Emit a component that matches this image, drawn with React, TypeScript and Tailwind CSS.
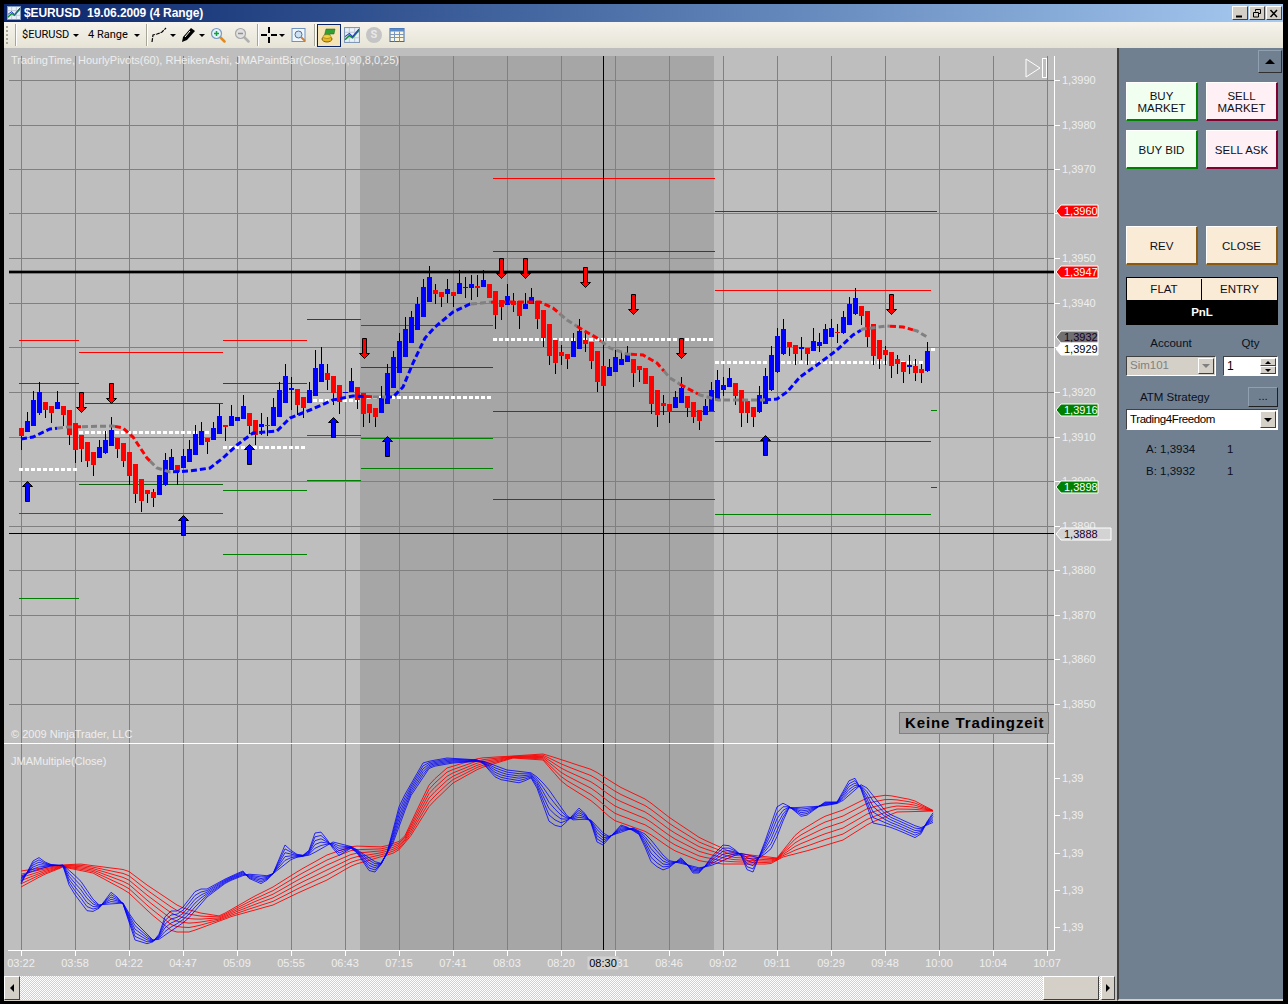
import type { ReactNode } from "react";

const BLUE = "#0000ff";
const RED = "#ff0000";

// [blue?, high, bodyTop, bodyBottom, low], in 3x crop units, one row per chart section
type Bar = [number, number, number, number, number];
const barsA: Bar[] = [
  [0,205,205,228,270],[1,155,183,216,216],[1,94,120,198,198],[1,67,96,160,165],[0,126,126,150,174],
  [0,138,138,160,189],[1,94,126,148,148],[0,138,138,165,198],[0,150,150,225,255],[0,190,190,270,310],
  [0,225,225,267,305],[0,246,246,303,320],[0,276,276,315,348],[1,240,261,294,294],[1,213,240,279,282],
  [1,171,210,258,258],[0,234,234,267,294],[0,249,249,303,320],[0,276,276,348,375],[0,312,312,402,430],
  [0,357,357,423,456],[0,390,390,402,430],[0,387,396,414,440],[1,345,345,405,405],[1,280,300,375,378],
  [1,267,291,330,330],[0,315,315,336,375],[1,267,288,324,324],[1,240,267,306,306],[1,195,222,285,285],
  [1,186,213,255,255],[0,234,234,246,282],[1,186,204,240,240],[1,132,168,222,222],[0,195,195,201,243],
  [1,135,168,198,198],[1,171,171,183,183],[1,105,138,177,177],[0,159,159,198,222],[0,180,180,225,255],
  [1,159,192,201,225],[0,171,195,198,228],[1,114,141,198,198],[1,66,90,171,171],[1,12,48,129,129],
  [1,51,84,90,150],[0,87,87,135,165],[0,111,111,144,174],[1,66,90,129,129],[1,-30,24,108,108],
  [1,-39,12,66,66],[0,12,39,60,90],[0,48,48,99,135],[0,75,75,126,162],[1,96,96,99,99],
  [1,24,63,96,96],[0,81,81,120,147],
];
const barsB: Bar[] = [
  [0,430,430,492,530],[0,462,462,490,520],[0,474,474,500,530],[1,408,444,489,489],[1,342,370,462,462],
  [1,303,322,414,414],[1,250,274,370,370],[1,200,238,322,322],[1,183,202,280,280],[1,141,163,241,241],
  [1,86,112,202,202],[1,48,82,157,157],[0,102,120,132,162],[0,126,126,141,171],[1,87,117,132,160],
  [0,126,126,138,171],[1,60,99,132,132],[1,80,111,114,145],[1,75,102,114,150],[0,75,108,114,140],
  [1,60,90,111,111],[0,102,102,144,144],[0,123,123,195,237],[0,150,150,171,210],[1,102,138,165,165],
  [0,130,153,165,185],[0,153,153,198,237],[1,130,162,177,177],[1,114,141,162,162],[0,153,153,207,237],
  [0,180,180,264,291],[0,222,222,318,345],[0,270,270,339,372],[0,285,306,318,345],[0,312,312,327,357],
  [1,250,273,321,321],[1,207,243,297,297],[0,250,270,282,306],[0,276,276,333,357],[0,303,303,396,426],
  [0,348,348,408,408],[1,327,351,378,378],[1,300,321,366,366],[1,306,327,345,345],[1,288,315,336,336],
  [0,327,327,369,411],[0,348,348,360,396],[0,354,354,402,402],[0,378,378,462,492],[0,420,420,495,530],
  [0,435,459,468,495],[0,462,462,486,520],[1,423,441,474,474],[1,381,414,459,459],[0,438,438,474,500],
  [0,456,456,501,520],[0,480,480,513,540],[1,447,468,495,495],[1,396,420,483,483],[1,360,390,450,450],
];
const barsC: Bar[] = [
  [1,321,345,360,378],[1,294,324,351,351],[0,339,339,378,405],[0,360,360,429,471],[0,393,393,429,459],
  [0,411,411,441,471],[1,348,375,426,429],[1,294,318,402,402],[1,228,255,360,363],[1,174,198,306,309],
  [1,147,177,252,255],[0,216,216,231,258],[0,225,225,252,285],[1,201,231,237,270],[0,234,234,252,285],
  [1,174,213,243,243],[1,189,216,228,246],[1,162,177,222,222],[1,147,174,201,201],[0,162,186,189,219],
  [1,123,141,189,192],[1,81,102,165,165],[1,54,84,132,135],[0,108,108,138,165],[0,123,123,201,231],
  [0,162,162,258,285],[0,210,210,267,297],[0,228,240,255,285],[0,246,246,288,324],[0,255,267,282,312],
  [0,276,276,306,339],[1,255,285,291,312],[0,267,288,309,333],[0,282,297,309,339],[1,216,243,303,306],
];
const bars = [
  ...barsA.map((b) => ({ b, off: 360 })),
  ...barsB.map((b) => ({ b, off: 250 })),
  ...barsC.map((b) => ({ b, off: 270 })),
].map(({ b, off }, i) => ({
  x: 21 + 6 * i,
  blue: b[0] === 1,
  hi: Math.round(b[1] / 3) + off,
  top: Math.round(b[2] / 3) + off,
  bot: Math.round(b[3] / 3) + off,
  lo: Math.round(b[4] / 3) + off,
}));

type Pt = [number, number];
const ma: Pt[] = [
  [21,439],[33,437],[50,429],[67,427],[113,426],[123,428],[133,437],[147,458],[157,468],[170,472],[190,471],[210,468],
  [223,458],[237,445],[253,433],[277,431],[290,418],[310,410],[333,400],[353,396],[375,397],[393,397],[403,387],
  [413,363],[425,338],[435,327],[453,312],[470,304],[493,302],[540,302],[553,308],[567,320],[583,330],[597,338],
  [610,348],[627,354],[643,355],[657,363],[670,378],[683,386],[700,395],[718,400],[763,400],[777,399],[787,392],
  [800,377],[817,365],[837,350],[853,335],[863,329],[887,326],[903,327],[917,331],[927,337],
];
const maColors: [number, number, string][] = [
  [21,57,BLUE],[57,75,"#808080"],[75,82,RED],[82,115,"#808080"],[115,150,RED],[150,173,"#808080"],[173,366,BLUE],
  [366,373,RED],[373,386,"#808080"],[386,471,BLUE],[471,491,"#808080"],[491,560,RED],[560,577,"#808080"],
  [577,601,RED],[601,631,"#808080"],[631,664,RED],[664,680,"#808080"],[680,698,RED],[698,765,"#808080"],
  [765,861,BLUE],[861,890,"#808080"],[890,913,RED],[913,927,"#808080"],
];

function yAt(pts: Pt[], x: number) {
  if (x <= pts[0][0]) return pts[0][1];
  for (let i = 1; i < pts.length; i++) {
    if (x <= pts[i][0]) {
      const [x0, y0] = pts[i - 1];
      const [x1, y1] = pts[i];
      return y0 + ((y1 - y0) * (x - x0)) / (x1 - x0);
    }
  }
  return pts[pts.length - 1][1];
}

function maPoints(x0: number, x1: number) {
  const inner = ma.filter(([x]) => x > x0 && x < x1);
  return [[x0, yAt(ma, x0)], ...inner, [x1, yAt(ma, x1)]].map((p) => p.join(",")).join(" ");
}

const R2 = "#ff0000";
const R1 = "#c80000";
const S2 = "#008000";
const S1 = "#106010";
// pivot sections: colour, y, x from, x to
const levels: [string, number, number, number][] = [
  [R2,340,19,79],[R1,383,19,79],[S2,513,19,223],[S2,598,19,79],
  [R2,352,79,223],[R1,403,85,223],[S1,484,79,223],
  [R2,340,223,307],[R1,383,223,307],[S2,490,223,307],[S2,554,223,307],
  [R1,319,307,361],[S2,435,307,361],[S2,480,307,361],
  [R2,325,361,493],[R1,367,361,493],[S2,438,361,493],[S2,468,361,493],
  [R2,178,493,715],[R1,251,493,715],[S1,411,493,715],[S1,499,493,715],
  [R1,211,715,937],[R2,290,715,931],[S1,441,715,931],[S2,514,715,931],
  [S2,410,931,937],[S1,487,931,937],
];
const pivots: [number, number, number][] = [
  [469,19,78],[432,79,222],[447,223,306],[400,313,360],[397,361,492],[339,493,714],[362,715,925],[349,931,936],
];
const downArrows: [number, number][] = [
  [81,392],[111,383],[364,338],[501,258],[525,258],[585,267],[633,294],[681,338],[891,294],
];
const upArrows: [number, number][] = [[27,481],[183,515],[249,444],[333,417],[387,436],[765,435]];

const priceLabels: [string, number][] = [
  ["1,3990",80],["1,3980",125],["1,3970",169],["1,3960",213],["1,3950",258],["1,3940",303],["1,3930",347],
  ["1,3920",392],["1,3910",437],["1,3900",481],["1,3890",526],["1,3880",570],["1,3870",615],["1,3860",659],["1,3850",704],
];
const flags: { label: string; y: number; fill: string; text: string; w?: number }[] = [
  { label: "1,3960", y: 211, fill: "#ff0000", text: "#ffffff" },
  { label: "1,3947", y: 272, fill: "#ff0000", text: "#ffffff" },
  { label: "1,3932", y: 337, fill: "#707070", text: "#180028" },
  { label: "1,3929", y: 349, fill: "#ffffff", text: "#000000" },
  { label: "1,3916", y: 410, fill: "#008000", text: "#ffffff" },
  { label: "1,3898", y: 487, fill: "#008000", text: "#ffffff" },
  { label: "1,3888", y: 534, fill: "#d3d3d3", text: "#180028", w: 1111 },
];
const times = [
  "03:22","03:58","04:22","04:47","05:09","05:55","06:43","07:15","07:41","08:03",
  "08:20","08:31","08:46","09:02","09:11","09:29","09:48","10:00","10:04","10:07",
];

// oscillator fans: the two outer lines of each, the lines between are interpolated
const blueFast: Pt[] = [
  [21,884],[33,861],[40,857],[47,864],[63,866],[70,888],[88,912],[97,911],[112,891],[123,904],[135,940],[148,944],
  [157,940],[167,911],[180,911],[197,889],[207,889],[227,878],[243,871],[248,878],[262,884],[272,876],[285,845],
  [295,854],[307,856],[315,833],[322,832],[338,856],[353,847],[370,872],[377,872],[387,853],[400,803],[423,763],
  [430,761],[447,758],[480,760],[497,779],[520,783],[533,777],[550,824],[562,827],[580,807],[590,820],[598,845],
  [603,845],[622,824],[640,835],[652,864],[665,871],[682,857],[693,873],[700,873],[713,855],[725,843],[740,853],
  [748,872],[753,872],[763,847],[778,804],[785,803],[803,818],[825,802],[837,802],[850,779],[857,778],[873,823],
  [887,826],[900,831],[916,838],[922,833],[930,815],[934,812],
];
const blueSlow: Pt[] = [
  [21,876],[33,871],[50,866],[63,865],[80,880],[97,905],[123,903],[133,920],[155,942],[187,920],[207,897],[227,882],
  [247,874],[270,876],[293,858],[310,855],[333,842],[353,847],[380,865],[393,843],[410,797],[430,767],[453,763],
  [483,761],[507,770],[533,773],[547,787],[570,820],[590,819],[607,837],[633,828],[647,835],[667,860],[700,868],
  [713,865],[740,853],[760,858],[773,847],[788,808],[823,806],[840,803],[863,783],[887,813],[920,828],[934,822],
];
const redTop: Pt[] = [
  [21,871],[63,865],[80,864],[127,870],[147,885],[180,907],[200,913],[220,916],[253,897],[273,887],[300,870],[327,855],
  [353,846],[383,847],[403,840],[417,810],[430,783],[447,768],[480,758],[513,756],[543,754],[553,757],[593,770],
  [620,787],[647,800],[670,818],[700,838],[733,853],[777,858],[797,833],[823,817],[843,810],[867,798],[887,795],
  [913,800],[934,811],
];
const redBottom: Pt[] = [
  [21,887],[43,875],[63,867],[93,873],[128,892],[150,913],[173,932],[190,932],[233,916],[273,905],[300,892],[327,880],
  [353,865],[397,852],[410,837],[430,805],[453,783],[480,768],[513,758],[543,760],[563,783],[593,802],[613,820],
  [647,832],[673,850],[700,861],[723,864],[770,864],[783,857],[810,850],[843,840],[870,823],[897,812],[934,811],
];

function fanLines(a: Pt[], b: Pt[]) {
  const lines: string[] = [];
  for (let n = 0; n < 6; n++) {
    const t = n / 5;
    const pts: string[] = [];
    for (let x = 21; x <= 933; x += 6) {
      pts.push(`${x},${(yAt(a, x) * (1 - t) + yAt(b, x) * t).toFixed(1)}`);
    }
    lines.push(pts.join(" "));
  }
  return lines;
}

function Chart() {
  const gridX = Array.from({ length: 20 }, (_, i) => 21 + 54 * i);
  const gridY = priceLabels.map(([, y]) => y);
  return (
    <svg viewBox="4 48 1113 928" className="block h-[928px] w-[1113px]">
      <rect x={4} y={48} width={1113} height={928} fill="#bebebe" />
      <rect x={360} y={56} width={354} height={894} fill="#a6a6a6" />

      <g shapeRendering="crispEdges">
        {gridX.map((x) => (
          <rect key={x} x={x} y={56} width={1} height={894} fill="#808080" />
        ))}
        {gridY.map((y) => (
          <rect key={y} x={9} y={y} width={1045} height={1} fill="#808080" />
        ))}
        {levels.map(([c, y, a, b]) => (
          <rect key={`${y}-${a}`} x={a} y={y} width={b - a} height={1} fill={c} />
        ))}
        {pivots.map(([y, a, b]) => (
          <line key={y} x1={a} x2={b} y1={y + 0.5} y2={y + 0.5} stroke="#fff" strokeWidth={3} strokeDasharray="4 2" />
        ))}
        <rect x={9} y={270} width={1045} height={4} fill="#000" opacity={0.35} />
        <rect x={9} y={271} width={1045} height={2} fill="#000" />
        <rect x={9} y={533} width={1045} height={1} fill="#000" />
        <rect x={603} y={56} width={1} height={894} fill="#000" />
        {bars.map((b) => (
          <g key={b.x}>
            <rect x={b.x} y={b.hi} width={1} height={b.lo - b.hi} fill="#000" />
            <rect x={b.x - 2} y={b.top} width={5} height={b.bot - b.top} fill={b.blue ? BLUE : RED} />
          </g>
        ))}
      </g>

      {maColors.map(([a, b, c]) => (
        <polyline key={a} points={maPoints(a, b)} fill="none" stroke={c} strokeWidth={3} strokeDasharray="6 3" />
      ))}

      <g transform="translate(0.5 0.5)">
        {downArrows.map(([x, t]) => (
          <polygon
            key={x}
            points={`${x - 2},${t} ${x + 2},${t} ${x + 2},${t + 15} ${x + 5},${t + 15} ${x},${t + 20} ${x - 5},${t + 15} ${x - 2},${t + 15}`}
            fill={RED}
            stroke="#000"
          />
        ))}
        {upArrows.map(([x, t]) => (
          <polygon
            key={x}
            points={`${x - 2},${t + 20} ${x + 2},${t + 20} ${x + 2},${t + 5} ${x + 5},${t + 5} ${x},${t} ${x - 5},${t + 5} ${x - 2},${t + 5}`}
            fill={BLUE}
            stroke="#000"
          />
        ))}
      </g>

      {/* divider between price panel and oscillator */}
      <rect x={4} y={743} width={1050} height={1} fill="#fff" />

      {fanLines(redTop, redBottom).map((p, i) => (
        <polyline key={i} points={p} fill="none" stroke={RED} strokeWidth={0.9} />
      ))}
      {fanLines(blueFast, blueSlow).map((p, i) => (
        <polyline key={i} points={p} fill="none" stroke={BLUE} strokeWidth={0.8} />
      ))}

      {/* axes */}
      <g shapeRendering="crispEdges" fill="#fff">
        <rect x={1054} y={56} width={1} height={895} />
        <rect x={8} y={950} width={1047} height={1} />
        {gridX.map((x) => (
          <rect key={x} x={x} y={950} width={1} height={6} />
        ))}
        {gridY.map((y) => (
          <rect key={y} x={1054} y={y} width={6} height={1} />
        ))}
        {[778, 815, 853, 890, 927].map((y) => (
          <rect key={y} x={1054} y={y} width={6} height={1} />
        ))}
      </g>

      <g className="fill-[#eeeeee] text-[11px]">
        <text x={11} y={64}>TradingTime, HourlyPivots(60), RHeikenAshi, JMAPaintBar(Close,10,90,8,0,25)</text>
        <text x={11} y={738}>© 2009 NinjaTrader, LLC</text>
        <text x={11} y={765}>JMAMultiple(Close)</text>
        {priceLabels.map(([t, y]) => (
          <text key={t} x={1062} y={y + 4}>{t}</text>
        ))}
        {[778, 815, 853, 890, 927].map((y) => (
          <text key={y} x={1062} y={y + 4}>1,39</text>
        ))}
        {times.map((t, i) => (
          <text key={t} x={21 + 54 * i} y={967} textAnchor="middle">{t}</text>
        ))}
      </g>

      {flags.map((f) => (
        <g key={f.label}>
          <polygon
            points={`1056,${f.y} 1061,${f.y - 6} ${f.w ?? 1098},${f.y - 6} ${f.w ?? 1098},${f.y + 6} 1061,${f.y + 6}`}
            fill={f.fill}
            stroke="#fff"
          />
          <text x={1064} y={f.y + 4} fill={f.text} className="text-[11px]">{f.label}</text>
        </g>
      ))}

      <rect x={587.5} y={956.5} width={31} height={13} fill="#d0d0d0" />
      <text x={603} y={967} textAnchor="middle" className="fill-black text-[11px]">08:30</text>

      {/* replay marker, top right */}
      <polygon points="1026,59 1040,68 1026,77" fill="none" stroke="#fff" />
      <rect x={1042.5} y={58.5} width={4} height={19} fill="#bebebe" stroke="#fff" />

      <rect x={899.5} y={712.5} width={149} height={21} fill="#a6a6a6" stroke="#808080" />
      <text x={905} y={728} className="fill-black text-[15px] font-bold tracking-[0.9px]">Keine Tradingzeit</text>
    </svg>
  );
}

function ChartIcon({ size = 15 }: { size?: number }) {
  return (
    <svg viewBox="0 0 15 15" width={size} height={size}>
      <rect x="0.5" y="0.5" width="14" height="14" fill="#e8f0f8" stroke="#8098b8" />
      <path d="M1 5h13M1 10h13M5 1v13M10 1v13" stroke="#c0c8d8" />
      <path d="M1 12l4-4 3 2 6-7" fill="none" stroke="#109030" strokeWidth="1.5" />
      <path d="M1 9l4-3 3 3 6-7" fill="none" stroke="#2040c0" />
    </svg>
  );
}

function Caret() {
  return <span className="ml-0 h-0 w-0 border-x-[3px] border-t-[3px] border-x-transparent border-t-black" />;
}

function Sep() {
  return <span className="h-[22px] w-[2px] border-l border-r border-l-[#a8a698] border-r-white" />;
}

function Magnifier({ muted, plus }: { muted?: boolean; plus?: boolean }) {
  const ring = muted ? "#a8a8a8" : "#7a9cc0";
  return (
    <svg viewBox="0 0 16 16" width={16} height={16}>
      <path d="M9.5 9.5l5 5" stroke={muted ? "#b0b0b0" : "#e08a20"} strokeWidth="2.5" strokeLinecap="round" />
      <circle cx="6.5" cy="6.5" r="5" fill={muted ? "#e0e0e0" : "#e4f2fb"} stroke={ring} strokeWidth="1.2" />
      <path d={plus ? "M4 6.5h5M6.5 4v5" : "M4 6.5h5"} stroke={muted ? "#909090" : "#18a040"} strokeWidth="1.5" />
    </svg>
  );
}

function Toolbar() {
  return (
    <div className="flex h-[26px] items-center whitespace-nowrap bg-gradient-to-b from-[#f6f4ec] to-[#e6e3d6] text-[11px] text-black [font-family:Roboto,sans-serif]">
      <span className="ml-[2px] h-[18px] w-[2px] bg-[repeating-linear-gradient(#a8a698_0_2px,transparent_2px_4px)]" />
      <span className="ml-[7px] flex"><Sep /></span>
      <span className="ml-[5px] w-[45px]">$EURUSD</span>
      <span className="ml-[6px] flex"><Caret /></span>
      <span className="ml-[9px] w-[39px]">4 Range</span>
      <span className="ml-[7px] flex"><Caret /></span>
      <span className="ml-[6px] flex"><Sep /></span>
      <svg viewBox="0 0 18 18" width={18} height={18} className="ml-[3px]">
        <path d="M1 16l1-7 4-1 3-1 2-1 4-4" fill="none" stroke="#000" strokeWidth="1.2" strokeDasharray="4 1" />
      </svg>
      <span className="ml-[1px] flex"><Caret /></span>
      <svg viewBox="0 0 18 18" width={18} height={18} className="ml-[4px]">
        <path d="M2 16l1-5 8-9 4 3-8 9z" fill="#000" />
        <path d="M5 11l5-6" stroke="#fff" />
      </svg>
      <span className="ml-[1px] flex"><Caret /></span>
      <span className="ml-[5px] flex"><Magnifier plus /></span>
      <span className="ml-[8px] flex"><Magnifier muted /></span>
      <span className="ml-[7px] flex"><Sep /></span>
      <svg viewBox="0 0 16 16" width={16} height={16} className="ml-[2px]">
        <path d="M0 8h6M10 8h6M8 0v6M8 10v6" stroke="#000" strokeWidth="2" />
      </svg>
      <span className="ml-[2px] flex"><Caret /></span>
      <svg viewBox="0 0 16 16" width={16} height={16} className="ml-[6px]">
        <rect x="1" y="1.5" width="13" height="13" fill="#f0f6fc" stroke="#6f93bd" />
        <circle cx="7.5" cy="7.5" r="3.5" fill="#cfe2f4" stroke="#4f6f94" />
        <path d="M10 10l4 4" stroke="#d08030" strokeWidth="2" />
      </svg>
      <span className="ml-[7px] flex"><Sep /></span>
      <span className="ml-[1px] flex h-[23px] w-[24px] items-center justify-center border border-[#0a246a] bg-[#f4e4b8]">
        <svg viewBox="0 0 16 16" width={16} height={16}>
          <path d="M5 2h9l-1 5H9l-1 3H3z" fill="#30a030" stroke="#206020" strokeWidth="0.5" />
          <ellipse cx="6" cy="12" rx="5" ry="3" fill="#e8b820" stroke="#806010" />
          <ellipse cx="6" cy="9.5" rx="4" ry="2" fill="#f0d040" stroke="#806010" strokeWidth="0.5" />
        </svg>
      </span>
      <span className="ml-[3px] flex"><ChartIcon size={16} /></span>
      <span className="ml-[6px] flex h-[16px] w-[16px] items-center justify-center rounded-full bg-[#c4c4c4] text-[11px] font-bold text-[#e8e8e8]">S</span>
      <svg viewBox="0 0 16 16" width={16} height={16} className="ml-[7px]">
        <rect x="1" y="1.5" width="14" height="13" fill="#fbf6dc" stroke="#3f6aa8" />
        <rect x="1" y="1.5" width="14" height="3" fill="#5b8ac8" />
        <path d="M1 7.5h14M1 10.5h14M5.5 4.5v10M10.5 4.5v10" stroke="#7a96bc" />
      </svg>
    </div>
  );
}

const raised = "border border-t-white border-l-white border-r-[#404040] border-b-[#404040]";
const sunken = "border border-t-[#404040] border-l-[#404040] border-r-white border-b-white";

function WinButton({ children }: { children: ReactNode }) {
  return (
    <span className={`flex h-[14px] w-[16px] items-center justify-center bg-[#d4d0c8] ${raised}`}>
      <svg viewBox="0 0 10 9" width={10} height={9} fill="none" stroke="#000">
        {children}
      </svg>
    </span>
  );
}

function Titlebar() {
  return (
    <div className="flex h-[18px] items-center bg-gradient-to-r from-[#0a246a] to-[#a6caf0] pl-[3px] pr-[1px]">
      <ChartIcon size={14} />
      <span className="ml-[3px] flex-1 whitespace-pre text-[12px] font-bold tracking-[-0.1px] text-white">
        $EURUSD  19.06.2009 (4 Range)
      </span>
      <div className="flex gap-[1px]">
        <WinButton>
          <path d="M1 7.5h6" strokeWidth="2" />
        </WinButton>
        <WinButton>
          <path d="M3.5 2.5v-2h5v4h-2M1.5 3.5h5v4.5h-5z" />
        </WinButton>
        <WinButton>
          <path d="M1.5 1l6.5 7M8 1l-6.5 7" strokeWidth="1.5" />
        </WinButton>
      </div>
    </div>
  );
}

function ActionButton({ children, kind }: { children: ReactNode; kind: "buy" | "sell" | "neutral" }) {
  const tone = {
    buy: "bg-[#f0fff0] border-r-[#008000] border-b-[#008000]",
    sell: "bg-[#fff0f5] border-r-[#800030] border-b-[#800030]",
    neutral: "bg-[#faebd7] border-r-[#8a5a10] border-b-[#8a5a10]",
  }[kind];
  return (
    <button className={`flex h-[39px] w-[72px] items-center justify-center border-[1px] border-t-white border-l-white border-b-2 border-r-2 pt-[2px] text-center text-[11.5px] leading-[12px] text-[#0a1020] ${tone}`}>
      <span>{children}</span>
    </button>
  );
}

function DropArrow({ muted }: { muted?: boolean }) {
  return (
    <span className={`flex w-[16px] items-center justify-center self-stretch bg-[#d4d0c8] ${raised}`}>
      <span className={`h-0 w-0 border-x-4 border-t-4 border-x-transparent ${muted ? "border-t-[#808080]" : "border-t-black"}`} />
    </span>
  );
}

function Sidebar() {
  return (
    <aside className="flex w-[166px] flex-col border-l-2 border-b-2 border-l-[#404040] border-b-[#d4d0c8] bg-[#708090] pl-[7px] text-[11.5px] text-[#0a1020]">
      <div className="mt-[2px] flex justify-end pr-[1px]">
        <button className={`flex h-[23px] w-[24px] items-center justify-center bg-[#708090] border border-t-[#90a0b0] border-l-[#90a0b0] border-r-[#303030] border-b-[#303030]`}>
          <span className="h-0 w-0 border-x-[5px] border-b-[5px] border-x-transparent border-b-black" />
        </button>
      </div>

      <div className="mt-[9px] grid w-[152px] grid-cols-2 gap-x-[8px] gap-y-[9px]">
        <ActionButton kind="buy">BUY<br />MARKET</ActionButton>
        <ActionButton kind="sell">SELL<br />MARKET</ActionButton>
        <ActionButton kind="buy">BUY BID</ActionButton>
        <ActionButton kind="sell">SELL ASK</ActionButton>
      </div>

      <div className="mt-[57px] grid w-[152px] grid-cols-2 gap-x-[8px]">
        <ActionButton kind="neutral">REV</ActionButton>
        <ActionButton kind="neutral">CLOSE</ActionButton>
      </div>

      <div className="mt-[12px] w-[152px] border border-black">
        <div className="flex h-[22px] bg-[#faebd7] pt-[1px]">
          <span className="flex w-[75px] items-center justify-center border-r border-black">FLAT</span>
          <span className="flex flex-1 items-center justify-center">ENTRY</span>
        </div>
        <div className="flex h-[24px] items-center justify-center bg-black pt-[1px] font-bold text-white">PnL</div>
      </div>

      <div className="mt-[12px] flex h-[14px] w-[152px] items-center">
        <span className="w-[90px] text-center">Account</span>
        <span className="ml-[7px] flex-1 text-center">Qty</span>
      </div>

      <div className="mt-[5px] flex h-[20px] w-[152px]">
        <div className={`flex w-[90px] items-stretch bg-[#d4d0c8] p-[1px] text-[#808080] ${sunken}`}>
          <span className="flex flex-1 items-center pl-[2px]">Sim101</span>
          <DropArrow muted />
        </div>
        <div className={`ml-[7px] flex flex-1 items-stretch bg-white p-[1px] text-[12px] text-black ${sunken}`}>
          <span className="flex flex-1 items-center pl-[2px]">1</span>
          <span className="flex w-[16px] flex-col">
            <span className={`flex flex-1 items-center justify-center bg-[#d4d0c8] ${raised}`}>
              <span className="h-0 w-0 border-x-[3px] border-b-[3px] border-x-transparent border-b-black" />
            </span>
            <span className={`flex flex-1 items-center justify-center bg-[#d4d0c8] ${raised}`}>
              <span className="h-0 w-0 border-x-[3px] border-t-[3px] border-x-transparent border-t-black" />
            </span>
          </span>
        </div>
      </div>

      <div className="mt-[11px] flex h-[20px] w-[152px] items-center">
        <span className="ml-[14px] flex-1 pt-[2px]">ATM Strategy</span>
        <button className="flex h-[20px] w-[30px] items-center justify-center border border-t-[#90a0b0] border-l-[#90a0b0] border-r-[#202020] border-b-[#202020] bg-[#708090]">...</button>
      </div>

      <div className={`mt-[2px] flex h-[21px] w-[152px] items-stretch bg-white p-[1px] text-[11.5px] tracking-[-0.4px] text-black ${sunken}`}>
        <span className="flex flex-1 items-center pl-[2px]">Trading4Freedom</span>
        <DropArrow />
      </div>

      <div className="mt-[13px] flex h-[14px] items-center">
        <span className="ml-[20px] w-[81px]">A: 1,3934</span>
        <span>1</span>
      </div>
      <div className="mt-[8px] flex h-[14px] items-center">
        <span className="ml-[20px] w-[81px]">B: 1,3932</span>
        <span>1</span>
      </div>
    </aside>
  );
}

function Scrollbar() {
  return (
    <div className="flex h-[24px] bg-[repeating-conic-gradient(#d4d0c8_0_25%,#ffffff_0_50%)] bg-[length:2px_2px]">
      <button className={`flex w-[16px] items-center justify-center bg-[#d4d0c8] ${raised}`}>
        <span className="h-0 w-0 border-y-4 border-r-4 border-y-transparent border-r-black" />
      </button>
      <span className="flex-1" />
      <span className={`w-[56px] bg-[#d4d0c8] ${raised}`} />
      <button className={`ml-[2px] flex w-[14px] items-center justify-center bg-[#d4d0c8] ${raised}`}>
        <span className="h-0 w-0 border-y-4 border-l-4 border-y-transparent border-l-black" />
      </button>
      <span className="w-[2px] bg-[#bebebe]" />
    </div>
  );
}

export default function App() {
  return (
    <div className="h-[1004px] w-[1288px] overflow-hidden bg-black pl-[4px] pr-[5px] pt-[4px] font-['Liberation_Sans',sans-serif]">
      <Titlebar />
      <Toolbar />
      <div className="flex">
        <div className="w-[1113px] bg-[#d4d0c8]">
          <Chart />
          <Scrollbar />
          <div className="h-[1px] bg-[#d4d0c8]" />
        </div>
        <Sidebar />
      </div>
    </div>
  );
}
